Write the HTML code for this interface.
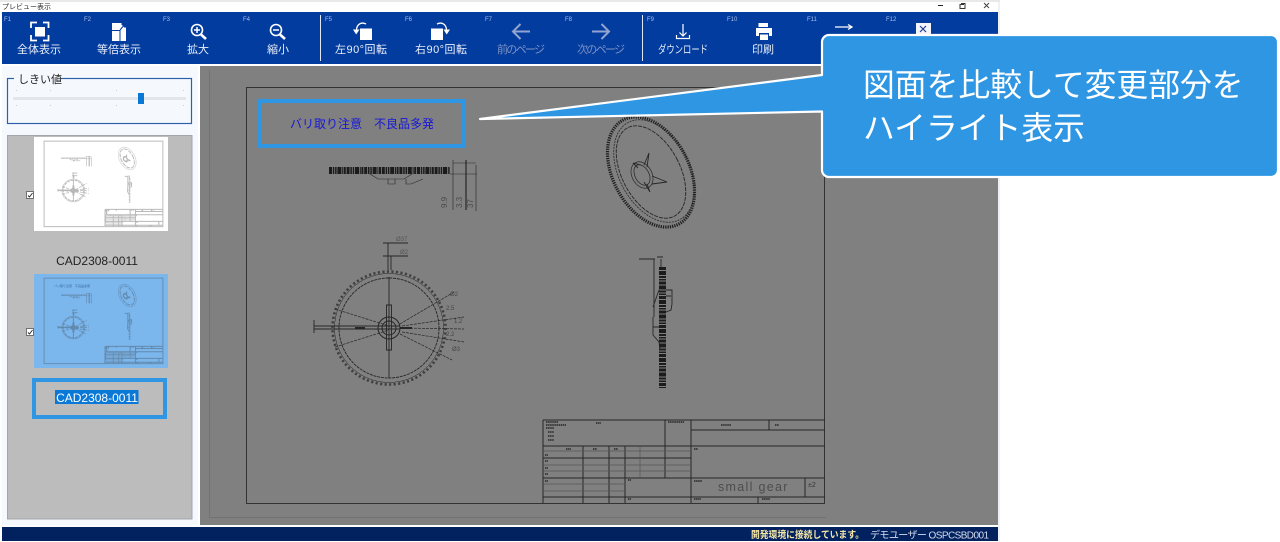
<!DOCTYPE html>
<html lang="ja"><head><meta charset="utf-8"><title>図面比較</title>
<style>
html,body{margin:0;padding:0;background:#fff;width:1280px;height:542px;overflow:hidden}
svg{display:block;font-family:"Liberation Sans","Noto Sans CJK JP",sans-serif}
.b text{font-size:11px;fill:#e8eefa;text-anchor:middle}
.b text.d{fill:#7d92c4}
.f text{font-size:6px;fill:#a9bde6}
#thin *{vector-effect:non-scaling-stroke}
</style></head><body>
<svg width="1280" height="542" viewBox="0 0 1280 542" xmlns="http://www.w3.org/2000/svg">
<defs>
<g id="dwg" fill="none" stroke="#262626">
 <g id="thin" stroke-width="1">
  <rect x="246.5" y="87.5" width="578" height="416" stroke="#333"/>
  <path d="M370 174l8 5h26l8-5M388 179v5h7v-5M406 179v5h5l12-5M450 174h27M453 160v50M476 165v46M453 163h23" stroke-width=".6"/>
  <path d="M466 160v50" stroke-width="1.200"/>
  <circle cx="389" cy="328" r="54.500" stroke-width=".5"/>
  <circle cx="389" cy="328" r="50" stroke-width=".9" stroke-dasharray="3 .8"/>
  <circle cx="389" cy="328" r="11"/><circle cx="389" cy="328" r="7"/>
  <path d="M389 277v101M386.500 305h5v45h-5zM314 326h86M314 329h86M314 320v13M383 243h25M383 256h25M388 243v27M391 256v14" stroke-width=".9"/>
  <path d="M335 309l54 17M335 347l54-17M400 324l54-32M402 326l62-9M402 328l62 1M402 332l62 10M400 334l52 26" stroke-width=".7" stroke-dasharray="3 1"/>
  <path d="M355 328h10M400 328h12" stroke-width="2"/>
  <ellipse cx="651" cy="172" rx="29" ry="50" transform="rotate(-28 651 172)" stroke-width=".9" stroke-dasharray="4 1"/>
  <ellipse cx="642" cy="175" rx="7" ry="11" transform="rotate(-28 642 175)" stroke-width=".7"/>
  <ellipse cx="642" cy="175" rx="10" ry="14" transform="rotate(-28 642 175)" stroke-width=".7"/>
  <path d="M649 153l-2 14M649 153l-5 12M633 163l8 2M633 163l5 5M667 182l-15-6M667 182l-15 2M650 192l-3-8M650 192l-6-10" stroke-width=".9"/>
  <path d="M639 259h16M654 259v58M661 259v8M657 257h6M666 290h6v14l-1 6-5 2M659 290l-6 17M653 317v18l6 7 1 7M653 327h6M666 296h5" stroke-width=".9"/>
  <path d="M543 420v83M543 420h282M543 446h282M691 420v83M665 420v58M691 430h134M691 478h134M691 497h134M543 458h148M543 478h148M543 497h148M583 446v57M609 446v57M625 446v57M769 420v10M805 478v19M758 497v6" stroke-width="1"/>
  <path d="M543 451h148M543 465h148M543 471h148M543 484h82M543 491h82M640 446v32" stroke="#555" stroke-width=".7"/>
  <path d="M546 422h12M546 425h20M546 428h8M548 432h6M548 436h6M548 440h6M596 423h5M668 422h16M721 425h10M775 425h4M566 449h5M593 449h4M614 449h4M545 455h3M545 461h3M545 468h3M545 474h3M545 481h3M628 480h3M628 499h3M694 449h4M694 481h8M694 499h7M762 499h8" stroke-width="1.500" stroke-dasharray="1.500 .6"/>
 </g>
 <path d="M329 170.500h121" stroke="#1c1c1c" stroke-width="7" stroke-dasharray="3 .8 1.500 .8 1.500 .8 4 .8 1 .6 2 .8"/>
 <circle cx="389" cy="328" r="56.500" stroke="#333" stroke-width="2.600" stroke-dasharray="2.100 2.450" opacity=".85"/>
 <ellipse cx="651" cy="172" rx="38" ry="59" transform="rotate(-28 651 172)" stroke="#202020" stroke-width="3.200" stroke-dasharray="1.300 1"/>
 <ellipse cx="654" cy="171" rx="35" ry="55" transform="rotate(-28 654 171)" stroke="#333" stroke-width=".9" stroke-dasharray="2 1"/>
 <path d="M662.500 267v121" stroke="#1c1c1c" stroke-width="7" stroke-dasharray="3 1 4 1 2 1 1.500 1"/>
</g>
</defs>

<rect width="1280" height="542" fill="#fff"/>
<rect width="1000" height="2" fill="#e9e9e9"/>
<rect x="998" y="2" width="2" height="540" fill="#eef1f5"/>
<text x="2" y="9" font-size="7" fill="#333">プレビュー表示</text>
<path d="M938 5.500h5" stroke="#222"/>
<path d="M961 3.500h4v5h-5v-4h4" fill="none" stroke="#333"/>
<path d="M984 3l5 5M989 3l-5 5" stroke="#444"/>

<rect x="2" y="12" width="996" height="52" fill="#033c9f"/>
<g class="f">
<text x="4" y="21">F1</text><text x="84" y="21">F2</text><text x="163" y="21">F3</text><text x="243" y="21">F4</text>
<text x="325" y="21">F5</text><text x="405" y="21">F6</text><text x="485" y="21">F7</text><text x="565" y="21">F8</text>
<text x="647" y="21">F9</text><text x="727" y="21">F10</text><text x="807" y="21">F11</text><text x="886" y="21">F12</text>
</g>
<g class="b">
<text x="39" y="53">全体表示</text><text x="119" y="53">等倍表示</text><text x="198" y="53">拡大</text><text x="278" y="53">縮小</text>
<text x="361" y="53" textLength="52">左90°回転</text><text x="441" y="53" textLength="52">右90°回転</text>
<text class="d" x="521" y="53" textLength="48">前のページ</text><text class="d" x="601" y="53" textLength="48">次のページ</text>
<text x="683" y="53" textLength="50" lengthAdjust="spacingAndGlyphs">ダウンロード</text><text x="763" y="53">印刷</text><text x="843" y="53">差分表示</text>
</g>
<path d="M320.500 15v46M642.500 15v46" stroke="#dfe6f5" stroke-width="1"/>
<g fill="none" stroke="#fff" stroke-width="1.800">
 <path d="M31 28v-5.500h6M43 22.500h5.500v5.500M48.500 35v5.500h-5.500M37 40.500h-6v-5.500"/>
 <rect x="35" y="27" width="10" height="9.500" fill="#fff" stroke="none"/>
</g>
<path d="M112 23h9l5 5v13h-14z" fill="#fff"/><path d="M120 30l5-6M112 30.500h8v10.500" stroke="#033c9f" fill="none" stroke-width="1"/>
<path d="M121 24h4v4" fill="#033c9f"/>
<g fill="none" stroke="#fff">
 <circle cx="197" cy="30" r="5.500" stroke-width="1.600"/><path d="M194 30h6M197 27v6" stroke-width="1.500"/><path d="M201 34.500l5 4.500" stroke-width="2.600"/>
 <circle cx="276" cy="30" r="5.500" stroke-width="1.600"/><path d="M273 30h6" stroke-width="1.500"/><path d="M280 34.500l5 4.500" stroke-width="2.600"/>
 <path d="M366 24c-5-2.500-9 .5-9.500 5.500" stroke-width="1.300"/><path d="M437 24c5-2.500 9 .5 9.500 5.500" stroke-width="1.300"/>
</g>
<rect x="360" y="28.500" width="12" height="11.500" fill="#fff"/><path d="M353 29.500h6.500l-3.300 5z" fill="#fff"/>
<rect x="431" y="28.500" width="12" height="11.500" fill="#fff"/><path d="M443.500 29.500h6.500l-3.300 5z" fill="#fff"/>
<g fill="none" stroke="#93a5cf" stroke-width="2">
 <path d="M530 31.500h-17M520.500 24l-7.500 7.500 7.500 7.500"/>
 <path d="M592 31.500h17M601.500 24l7.500 7.500-7.500 7.500"/>
</g>
<path d="M683 24v12M679.500 32.500l3.500 3.500 3.500-3.500M676.500 35v3.500h13V35" fill="none" stroke="#fff" stroke-width="1.200"/>
<path d="M758.500 23h9.500v4h-9.500zM756 28h16v8h-3v-3h-10v3h-3zM760 34.500h8v5.500h-8z" fill="#fff"/>
<path d="M835 27h16M848 24.500l4 2.500-4 2.500" fill="none" stroke="#fff" stroke-width="1.300"/>
<rect x="916" y="23" width="15" height="11" fill="#f3f5fb"/><path d="M920 26l6 6M926 26l-6 6" stroke="#1d3f8f" stroke-width="1.200"/>

<rect x="2" y="66" width="196" height="459" fill="#f5f9fe"/>
<rect x="7.500" y="78.500" width="184" height="45" fill="#f5f9fe" stroke="#2f5fa8" stroke-width="1.200"/>
<rect x="14" y="76" width="47" height="5" fill="#f5f9fe"/>
<text x="18" y="83" font-size="11" fill="#222">しきい値</text>
<rect x="13" y="97" width="173" height="3" fill="#e3e6e9"/>
<g fill="#c8ccd2"><rect x="16" y="90" width="1" height="1"/><rect x="50" y="90" width="1" height="1"/><rect x="116" y="90" width="1" height="1"/><rect x="183" y="90" width="1" height="1"/><rect x="16" y="105" width="1" height="1"/><rect x="50" y="105" width="1" height="1"/><rect x="116" y="105" width="1" height="1"/><rect x="183" y="105" width="1" height="1"/></g>
<rect x="138" y="93" width="6" height="11" fill="#0a78d6"/>

<rect x="7.500" y="135.500" width="184.500" height="383.500" fill="#bcbcbc" stroke="#a2a6aa"/>
<rect x="34" y="137" width="134" height="94" fill="#fff"/>
<g transform="translate(44 141) scale(.2055) translate(-246 -87)" opacity=".32"><use href="#dwg"/></g>
<rect x="26.500" y="191.500" width="7" height="7" fill="#fff" stroke="#707070"/><path d="M28 195.500l1.500 1.500 3-4" fill="none" stroke="#222" stroke-width=".9"/>
<text x="97" y="265" font-size="12" fill="#222" text-anchor="middle">CAD2308-0011</text>
<rect x="34" y="274" width="134" height="94" fill="#7bb6ec"/>
<g transform="translate(44 278) scale(.2055) translate(-246 -87)" opacity=".3"><use href="#dwg"/></g>
<text x="54" y="287" font-size="3" fill="#3a6a9c">バリ取り注意　不良品多発</text>
<rect x="26.500" y="328.500" width="7" height="7" fill="#fff" stroke="#707070"/><path d="M28 332.500l1.500 1.500 3-4" fill="none" stroke="#222" stroke-width=".9"/>
<rect x="34" y="380" width="131" height="37" fill="none" stroke="#2e96e3" stroke-width="4"/>
<rect x="55" y="390" width="83.500" height="14" fill="#0a78d6"/>
<text x="97" y="402" font-size="12" fill="#fff" text-anchor="middle">CAD2308-0011</text>

<rect x="200" y="66" width="798" height="459" fill="#808080"/>
<path d="M209.500 70v447.500h617" fill="none" stroke="#737373" stroke-width="1"/>
<use href="#dwg"/>
<text x="290" y="128" font-size="12" fill="#1717d6">バリ取り注意　不良品多発</text>
<text x="718" y="491" font-size="12.500" fill="#4d4d4d" letter-spacing="1.300">small gear</text>
<text x="808" y="487" font-size="7" fill="#333">±2</text>
<rect x="260" y="101" width="203" height="45" fill="none" stroke="#2e96e3" stroke-width="4"/>
<text x="447" y="208" transform="rotate(-90 447 208)" font-size="8" fill="#4a4a4a">9.9</text>
<text x="462" y="208" transform="rotate(-90 462 208)" font-size="8" fill="#4a4a4a">3.3</text>
<text x="473" y="208" transform="rotate(-90 473 208)" font-size="8" fill="#4a4a4a">37</text>
<text x="396" y="241" font-size="6" fill="#555">Ø37</text>
<text x="400" y="254" font-size="6" fill="#555">Ø2</text>
<text x="450" y="296" font-size="6" fill="#444">Ø2</text>
<text x="446" y="310" font-size="6" fill="#444">2.5</text>
<text x="454" y="323" font-size="6" fill="#444">1.2</text>
<text x="446" y="336" font-size="6" fill="#444">2.2</text>
<text x="452" y="351" font-size="6" fill="#444">Ø3</text>

<rect x="2" y="527" width="996" height="14" fill="#02215f"/>
<text x="751" y="538" font-size="9.500" font-weight="bold" fill="#f6e7a6" textLength="113" lengthAdjust="spacingAndGlyphs">開発環境に接続しています。</text>
<text x="870" y="538.500" font-size="10" fill="#d6dcec" textLength="119" lengthAdjust="spacing">デモユーザー OSPCSBD001</text>

<path d="M480 119L822 75V42a7 7 0 0 1 7-7H1271a7 7 0 0 1 7 7V170a7 7 0 0 1-7 7H829a7 7 0 0 1-7-7V111.500Z" fill="#2e96e3" stroke="#fff" stroke-width="2.200" stroke-linejoin="round"/>
<text x="863" y="96" font-size="31.800" fill="#fff">図面を比較して変更部分を</text>
<text x="863" y="139" font-size="31.800" fill="#fff">ハイライト表示</text>
</svg>
</body></html>
